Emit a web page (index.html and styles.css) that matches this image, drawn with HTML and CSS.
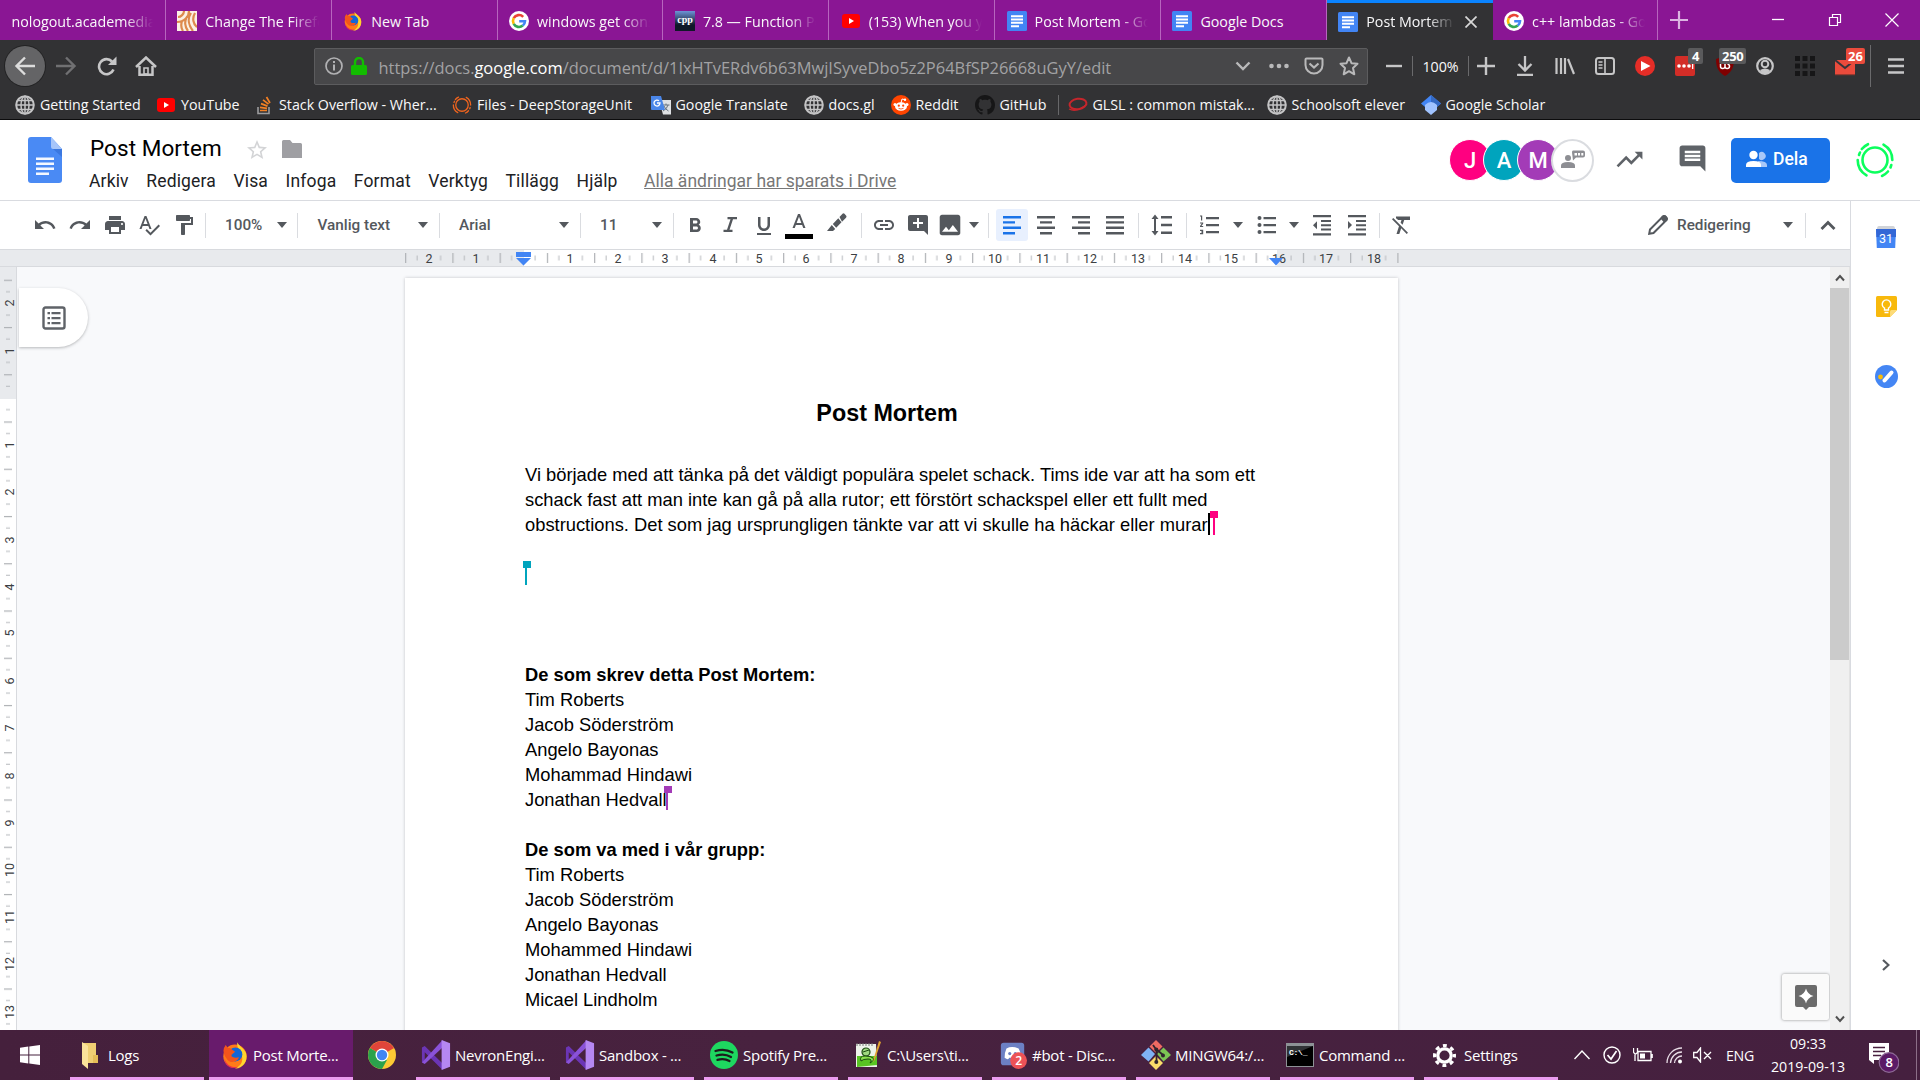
FILE: index.html
```html
<!DOCTYPE html>
<html lang="sv">
<head>
<meta charset="utf-8">
<title>Post Mortem</title>
<link rel="stylesheet" href="styles.css">
</head>
<body>
<svg class="defs" width="0" height="0">
  <symbol id="gdoc" viewBox="0 0 20 20"><rect width="20" height="20" rx="1.5" fill="#4285f4"/><path d="M4 4.2h12v2H4zM4 7.4h12v2H4zM4 10.8h12v2H4zM4 14.2h8v2H4z" fill="#fff"/></symbol>
  <symbol id="google" viewBox="0 0 20 20"><circle cx="10" cy="10" r="10" fill="#fff"/><g fill="none" stroke-width="2.6"><path d="M14.2 5.8A6 6 0 0 0 4.7 7.2" stroke="#ea4335"/><path d="M4.7 7.2a6 6 0 0 0 0 5.6" stroke="#fbbc05"/><path d="M4.7 12.8a6 6 0 0 0 9.1 1.8" stroke="#34a853"/><path d="M13.8 14.6A6 6 0 0 0 16 10.2h-5.8" stroke="#4285f4"/></g></symbol>
  <symbol id="youtube" viewBox="0 0 20 20"><rect x="1" y="3" width="18" height="14" rx="3" fill="#f00"/><path d="M8 7l5 3-5 3z" fill="#fff"/></symbol>
  <symbol id="firefox" viewBox="0 0 24 24"><circle cx="12" cy="13" r="10" fill="#ff7a18"/><path d="M14 1c1 3 6 5 7.500 9.500C23.500 18 18 24 12 23.500c5-2 7-6 6-10.500C17.500 9 13 6 14 1z" fill="#ffd52e"/><circle cx="12.300" cy="11.500" r="6" fill="#1266d8"/><path d="M2.500 6c1-1 1-2 1.500-2.500l2 2.500c2 0 3 .5 3.500 1.500L12 9c-1 2-3 2-3 3.500s3 2.500 6.500 1.500c-1.500 4-7 5.500-10 2S1.500 9 2.500 6z" fill="#f3541c"/><path d="M3 15c1 5 6 8.500 12 7-5 3-12 0-12-7z" fill="#e62c50"/></symbol>
  <symbol id="globe" viewBox="0 0 20 20"><g fill="none" stroke="#c4c4c5" stroke-width="1.500"><circle cx="10" cy="10" r="8.800" stroke-width="2"/><ellipse cx="10" cy="10" rx="4" ry="8.800"/><path d="M10 1v18M1 10h18M2.500 5.500h15M2.500 14.500h15"/></g></symbol>
  <symbol id="rings" viewBox="0 0 40 40"><g fill="none" stroke="currentColor" stroke-width="2.600" stroke-linecap="round"><circle cx="20" cy="20" r="12.500"/><path d="M13 4.200A17.500 17.500 0 0 0 6.800 9M2.700 20a17.500 17.500 0 0 0 8.800 15.300M27 36a17.500 17.500 0 0 0 6-4.500M37.300 20A17.500 17.500 0 0 0 28.500 4.700M5 12.500a17 17 0 0 0-1 2.500M35.500 27.500l.8-2.500"/></g></symbol>
  <symbol id="caret" viewBox="0 0 10 6"><path d="M0 0h10L5 6z" fill="currentColor"/></symbol>
  <symbol id="vs" viewBox="0 0 30 32"><path d="M0 8l3-1.500L22 25v7L3 13v12l-3-1.500z" fill="#6b35b5"/><path d="M0 24l22-24v8L3 25.500z" fill="#8a52d8"/><path d="M21 0l9 3.500v25L21 32z" fill="#b587f2"/></symbol>
</svg>

<div class="browser">
  <div class="tabs">
    <div class="tab bare"><span>nologout.academedia</span></div>
    <div class="tab"><svg viewBox="0 0 20 20"><rect width="20" height="20" fill="#fbf1e4"/><g fill="none" stroke="#dd8a4d" stroke-width="2.200"><path d="M1 6c3 0 6-3 6-6M0 11c7 0 12-5 12-11M5 10c-1 3-1 7 1 10M10 6c-3 4-2 10 1 14M14 2c-4 6-2 13 2 18M18 2c-3 5-2 11 2 14"/></g></svg><span>Change The Firefox</span></div>
    <div class="tab"><svg><use href="#firefox"/></svg><span>New Tab</span></div>
    <div class="tab"><svg><use href="#google"/></svg><span>windows get console</span></div>
    <div class="tab"><svg viewBox="0 0 20 20"><defs><linearGradient id="cg" x2="0" y2="1"><stop stop-color="#6d93d6"/><stop offset=".7" stop-color="#101828"/></linearGradient></defs><rect width="20" height="20" fill="url(#cg)"/><text x="10" y="12" text-anchor="middle" class="cpp">cpp</text></svg><span>7.8 — Function Poi</span></div>
    <div class="tab"><svg><use href="#youtube"/></svg><span>(153) When you you</span></div>
    <div class="tab"><svg><use href="#gdoc"/></svg><span>Post Mortem - Goo</span></div>
    <div class="tab"><svg><use href="#gdoc"/></svg><span>Google Docs</span></div>
    <div class="tab active"><svg><use href="#gdoc"/></svg><span>Post Mortem - G</span><svg class="close" viewBox="0 0 12 12"><path d="M0.500.5l11 11M11.500.5l-11 11" stroke="#d8d8d8" stroke-width="1.700"/></svg></div>
    <div class="tab"><svg><use href="#google"/></svg><span>c++ lambdas - Goo</span></div>
    <svg class="newtab" viewBox="0 0 18 18"><path d="M9 0v18M0 9h18" stroke="#dcb4e2" stroke-width="2.200"/></svg>
    <div class="winctl">
      <svg viewBox="0 0 14 14"><path d="M1 6.500h12" stroke="#fff" stroke-width="1.300"/></svg>
      <svg viewBox="0 0 14 14"><path d="M1.500 4.500h8v8h-8zM4.500 4.500v-3h8v8h-3" fill="none" stroke="#fff" stroke-width="1.200"/></svg>
      <svg viewBox="0 0 14 14"><path d="M.5.500l13 13M13.500.500l-13 13" stroke="#fff" stroke-width="1.200"/></svg>
    </div>
  </div>

  <div class="nav">
    <div class="back"><svg width="22" height="20" viewBox="0 0 22 20"><path d="M21 10H3M11 1.500L2.500 10l8.500 8.500" fill="none" stroke="#dcdcdc" stroke-width="2.400"/></svg></div>
    <svg width="22" height="20" viewBox="0 0 22 20"><path d="M1 10h18M11 1.500l8.500 8.500-8.500 8.500" fill="none" stroke="#707072" stroke-width="2.400"/></svg>
    <svg width="22" height="20" viewBox="0 0 22 20"><path d="M17.500 13.500A7.500 7.500 0 1 1 16 5.500" fill="none" stroke="#c6c6c7" stroke-width="2.600"/><path d="M20.500.5v8.500H12z" fill="#c6c6c7"/></svg>
    <svg width="22" height="20" viewBox="0 0 22 20"><path d="M1 11L11 1.500 21 11M4.500 10v8.700h13V10" fill="none" stroke="#c6c6c7" stroke-width="2.500"/><path d="M9 18v-6h4v6z" fill="none" stroke="#c6c6c7" stroke-width="1.600"/></svg>
    <span></span>
    <div class="url">
      <svg width="18" height="18" viewBox="0 0 18 18"><circle cx="9" cy="9" r="8" fill="none" stroke="#b1b1b3" stroke-width="1.700"/><path d="M9 4v2M9 7.500v6" stroke="#b1b1b3" stroke-width="2"/></svg>
      <svg class="lock" width="16" height="18" viewBox="0 0 16 18"><rect y="8" width="16" height="10" rx="1.500" fill="#12bc00"/><path d="M4 9V5a4 4 0 0 1 8 0v4" fill="none" stroke="#12bc00" stroke-width="2.400"/></svg>
      <span class="addr">https://docs.<b>google.com</b>/document/d/1IxHTvERdv6b63MwjISyveDbo5z2P64BfSP26668uGyY/edit</span>
      <svg width="16" height="20" viewBox="0 0 16 20"><path d="M1.500 6.500L8 13l6.500-6.500" fill="none" stroke="#b9b9ba" stroke-width="2.400"/></svg>
      <svg class="dots" width="20" height="20" viewBox="0 0 20 20"><g fill="#b9b9ba"><circle cx="2.500" cy="10" r="2.300"/><circle cx="10" cy="10" r="2.300"/><circle cx="17.500" cy="10" r="2.300"/></g></svg>
      <svg width="20" height="18" viewBox="0 0 20 18"><path d="M1.500 2.500q0-1 1-1h15q1 0 1 1V8a8.500 8.500 0 0 1-17 0z" fill="none" stroke="#b9b9ba" stroke-width="2"/><path d="M5.500 6.500L10 10.500l4.500-4" fill="none" stroke="#b9b9ba" stroke-width="2.200"/></svg>
      <svg width="20" height="20" viewBox="0 0 20 20"><path d="M10 1.500l2.500 5.700 6 .6-4.500 4.200 1.300 6.300L10 15.200l-5.300 3.100L6 12 1.500 7.800l6-.6z" fill="none" stroke="#b9b9ba" stroke-width="2" stroke-linejoin="round"/></svg>
    </div>
    <svg class="minus" width="16" height="18" viewBox="0 0 16 18"><path d="M0 9h16" stroke="#c6c6c7" stroke-width="2.400"/></svg>
    <i class="bar"></i>
    <span class="zoom">100%</span>
    <i class="bar"></i>
    <svg class="plus" width="18" height="18" viewBox="0 0 18 18"><path d="M0 9h18M9 0v18" stroke="#c6c6c7" stroke-width="2.400"/></svg>
    <svg width="18" height="20" viewBox="0 0 18 20"><path d="M9 0v14M2.500 8L9 14.500 15.500 8M1 18.800h16" fill="none" stroke="#c6c6c7" stroke-width="2.300"/></svg>
    <svg width="20" height="18" viewBox="0 0 20 18"><path d="M1.500 1v16M6 1v16M10 1v16M13 2l6 15" fill="none" stroke="#c6c6c7" stroke-width="2.200"/></svg>
    <svg width="20" height="18" viewBox="0 0 20 18"><rect x="1" y="1" width="18" height="16" rx="2.500" fill="none" stroke="#c6c6c7" stroke-width="2"/><path d="M10 1v16M3.500 5h4M3.500 8h4M3.500 11h4" stroke="#c6c6c7" stroke-width="1.600"/></svg>
    <svg width="20" height="20" viewBox="0 0 20 20"><circle cx="10" cy="10" r="10" fill="#e52d27"/><path d="M6 5l9.500 5L6 15z" fill="#fff"/></svg>
    <div class="ext"><svg width="20" height="20" viewBox="0 0 20 20"><rect width="20" height="20" rx="2" fill="#d32d27"/><g fill="#fff"><circle cx="4" cy="10" r="1.800"/><circle cx="9" cy="10" r="1.800"/><circle cx="14" cy="10" r="1.800"/><path d="M17 8h1.300v5H17z"/></g></svg><em>4</em></div>
    <div class="ext"><svg width="20" height="20" viewBox="0 0 20 20"><path d="M10 0l9 3c0 8-2 13-9 17C3 16 1 11 1 3z" fill="#800000"/><path d="M5.500 8v2.500q0 2 2.200 2t2.300-2V8m0 2.500q0 2 2.200 2t2.300-2-2-2.500" fill="none" stroke="#fff" stroke-width="1.500"/></svg><em>250</em></div>
    <svg width="18" height="18" viewBox="0 0 18 18"><circle cx="9" cy="9" r="7.800" fill="none" stroke="#c6c6c7" stroke-width="2.200"/><circle cx="9" cy="7" r="3.300" fill="none" stroke="#c6c6c7" stroke-width="2"/><path d="M4 13q5-3 10 0l-2 3H6z" fill="#c6c6c7"/></svg>
    <svg width="20" height="20" viewBox="0 0 20 20"><path d="M0 0h5v5H0zM7.500 0h5v5h-5zM15 0h5v5h-5zM0 7.500h5v5H0zM7.500 7.500h5v5h-5zM15 7.500h5v5h-5zM0 15h5v5H0zM7.500 15h5v5h-5zM15 15h5v5h-5z" fill="#161617"/></svg>
    <div class="ext mail"><svg width="20" height="20" viewBox="0 0 20 20"><path d="M0 4h20v14H0z" fill="#ea4b3c"/><path d="M0 4l10 8L20 4" fill="none" stroke="#34343a" stroke-width="2"/><path d="M0 18h20v1.200H0z" fill="#9a3a30"/></svg><em>26</em></div>
    <i class="bar tall"></i>
    <svg width="16" height="18" viewBox="0 0 16 18"><path d="M0 2.500h16M0 9h16M0 15.500h16" stroke="#c6c6c7" stroke-width="2.300"/></svg>
  </div>

  <div class="marks">
    <div><svg><use href="#globe"/></svg>Getting Started</div>
    <div><svg><use href="#youtube"/></svg>YouTube</div>
    <div><svg viewBox="0 0 20 20"><path d="M4 12v6.500h11V12" fill="none" stroke="#9c9c9e" stroke-width="1.600"/><path d="M6 15.500h7M6 12.400l7 1M7 8.600l6.500 2.500M9 4.800l5.500 4.400M12.500 2l3.500 6" stroke="#f48024" stroke-width="1.700"/></svg>Stack Overflow - Wher...</div>
    <div class="orange"><svg><use href="#rings"/></svg>Files - DeepStorageUnit</div>
    <div><svg viewBox="0 0 20 20"><path d="M8 5h12v14.500h-8z" fill="#dfe1e4"/><path d="M11.500 10h7M15 8.500V10m2 0q-1 4-5 6m1-5q1 3 4.500 5" fill="none" stroke="#66717c" stroke-width="1"/><path d="M0 1h10l4 14H1q-1 0-1-1z" fill="#4a86e8"/><path d="M8 5.800A3 3 0 1 0 9 8H6" fill="none" stroke="#fff" stroke-width="1.300"/></svg>Google Translate</div>
    <div><svg><use href="#globe"/></svg>docs.gl</div>
    <div><svg viewBox="0 0 20 20"><circle cx="10" cy="10" r="10" fill="#ff4500"/><ellipse cx="10" cy="11.500" rx="6" ry="4.300" fill="#fff"/><circle cx="4" cy="9.500" r="1.500" fill="#fff"/><circle cx="16" cy="9.500" r="1.500" fill="#fff"/><path d="M10 8l1-4 3 .7" fill="none" stroke="#fff"/><circle cx="14" cy="4.800" r="1.200" fill="#fff"/><circle cx="7.800" cy="10.700" r="1.100" fill="#ff4500"/><circle cx="12.200" cy="10.700" r="1.100" fill="#ff4500"/><path d="M7.500 13.300q2.500 1.500 5 0" fill="none" stroke="#ff4500" stroke-width=".8"/></svg>Reddit</div>
    <div><svg viewBox="0 0 16 16"><path fill="#161617" d="M8 0C3.580 0 0 3.580 0 8c0 3.540 2.290 6.530 5.470 7.590.4.070.55-.17.55-.38 0-.19-.01-.82-.01-1.490-2.010.37-2.530-.49-2.690-.94-.09-.23-.48-.94-.82-1.130-.28-.15-.68-.52-.01-.53.63-.01 1.080.58 1.230.82.72 1.210 1.870.87 2.330.66.07-.52.28-.87.51-1.070-1.780-.2-3.640-.89-3.640-3.950 0-.87.31-1.590.82-2.150-.08-.2-.36-1.020.08-2.120 0 0 .67-.21 2.200.82.640-.18 1.320-.27 2-.27s1.360.09 2 .27c1.530-1.040 2.200-.82 2.200-.82.44 1.100.16 1.920.08 2.120.51.56.82 1.270.82 2.150 0 3.070-1.870 3.750-3.650 3.950.29.25.54.73.54 1.480 0 1.070-.01 1.930-.01 2.200 0 .21.15.46.55.38A8.010 8.010 0 0 0 16 8c0-4.420-3.580-8-8-8z"/></svg>GitHub</div>
    <div class="sep"><svg viewBox="0 0 20 20"><ellipse cx="10" cy="9" rx="8.500" ry="5.200" transform="rotate(-8 10 9)" fill="none" stroke="#c5262c" stroke-width="2"/><path d="M1 14q8 4 18-5" fill="none" stroke="#c5262c" stroke-width="1.300"/></svg>GLSL : common mistak...</div>
    <div><svg><use href="#globe"/></svg>Schoolsoft elever</div>
    <div><svg viewBox="0 0 20 20"><path d="M10 0l10 8.500-4 3.500H4L0 8.500z" fill="#4285f4"/><path d="M10 0l10 8.500-4 3.500-6-5z" fill="#356ac3"/><path d="M4 10q6-6 12 0v5l-6 5-6-5z" fill="#a0c3ff"/></svg>Google Scholar</div>
  </div>
</div>

<header class="head">
  <svg class="logo" viewBox="0 0 34 46"><path d="M3 0h20l11 12v31q0 3-3 3H3q-3 0-3-3V3q0-3 3-3z" fill="#4a8af4"/><path d="M23 0l11 12H25q-2 0-2-2z" fill="#a6c5fa"/><path d="M25 12h9v8z" fill="#3b78e0"/><path d="M8 20.500h18v2.500H8zM8 25.500h18V28H8zM8 30.500h18V33H8zM8 35.500h13V38H8z" fill="#f4f8ff"/></svg>
  <div class="names">
    <div class="titlerow"><h1>Post Mortem</h1>
      <svg class="star" viewBox="2 2 20 19"><path fill="#d3d4d6" d="M22 9.240l-7.190-.62L12 2 9.190 8.630 2 9.240l5.460 4.730L5.820 21 12 17.270 18.180 21l-1.630-7.030L22 9.240zM12 15.400l-3.760 2.270 1-4.280-3.320-2.880 4.380-.38L12 6.100l1.710 4.040 4.380.38-3.320 2.880 1 4.280L12 15.400z"/></svg>
      <svg class="folder" viewBox="0 0 20 18"><path d="M0 1.500Q0 0 1.500 0H8l2.500 3h8Q20 3 20 4.500V18H0z" fill="#9f9fa3"/></svg>
    </div>
    <nav class="menu"><span>Arkiv</span><span>Redigera</span><span>Visa</span><span>Infoga</span><span>Format</span><span>Verktyg</span><span>Tillägg</span><span>Hjälp</span><a>Alla ändringar har sparats i Drive</a></nav>
  </div>
  <div class="people"><b class="j">J</b><b class="a">A</b><b class="m">M</b><b class="chat"><svg width="24" height="20" viewBox="0 0 24 20"><g fill="#8d8e93"><circle cx="7" cy="8" r="3"/><path d="M0 18v-2.500Q0 12 7 12t7 3.500V18z"/><path d="M12 .5h10q2 0 2 2v3q0 2-2 2h-7l-3 3-1-8q0-2 1-2z"/></g><path d="M13.500 3h2.500v2.500h-2.500zM17 3h2v2.500h-2zM20.300 3h2v2.500h-2z" fill="#fff"/></svg></b></div>
  <svg class="trend" viewBox="0 0 24 24"><path d="M16 6l2.290 2.290-4.880 4.880-4-4L2 16.590 3.410 18l6-6 4 4 6.300-6.290L22 12V6z"/></svg>
  <svg class="cmt" viewBox="0 0 24 24"><path d="M21.990 4c0-1.100-.89-2-1.990-2H4c-1.100 0-2 .9-2 2v12c0 1.100.9 2 2 2h14l4 4-.01-18zM18 14H6v-2h12v2zm0-3H6V9h12v2zm0-3H6V6h12v2z"/></svg>
  <button class="share"><svg width="21" height="18" viewBox="0 0 21 18"><path d="M13 3a4 4 0 1 1 0 6zM12 11q9 0 9 4v2h-7z" fill="#a9c8f8"/><circle cx="7.500" cy="5" r="4.200" fill="#fff"/><path d="M0 17v-2q0-4 7.500-4t7.500 4v2z" fill="#fff"/></svg>Dela</button>
  <svg class="me" viewBox="0 0 40 40"><use href="#rings"/></svg>
</header>

<div class="work">
  <main class="editor">
    <div class="toolbar">
      <svg viewBox="0 0 24 24"><path d="M12.500 8c-2.650 0-5.050.99-6.900 2.600L2 7v9h9l-3.620-3.620c1.390-1.160 3.160-1.880 5.120-1.880 3.540 0 6.550 2.310 7.600 5.500l2.370-.78C21.080 11.030 17.150 8 12.500 8z"/></svg>
      <svg viewBox="0 0 24 24"><path d="M18.400 10.600C16.550 8.990 14.150 8 11.500 8c-4.650 0-8.580 3.030-9.960 7.220L3.900 16c1.050-3.190 4.050-5.500 7.600-5.500 1.950 0 3.730.72 5.120 1.880L13 16h9V7l-3.600 3.600z"/></svg>
      <svg viewBox="0 0 24 24"><path d="M19 8H5c-1.660 0-3 1.340-3 3v6h4v4h12v-4h4v-6c0-1.660-1.340-3-3-3zm-3 11H8v-5h8v5zm3-7c-.55 0-1-.45-1-1s.45-1 1-1 1 .45 1 1-.45 1-1 1zm-1-9H6v4h12V3z"/></svg>
      <svg viewBox="0 0 24 24"><path d="M12.450 16h2.090L9.430 3H7.570L2.460 16h2.090l1.120-3h5.640l1.140 3zm-6.020-5L8.500 5.480 10.570 11H6.430zm15.160.59l-8.090 8.090L9.830 16l-1.410 1.410 5.090 5.090L23 13l-1.410-1.410z"/></svg>
      <svg viewBox="0 0 24 24"><path d="M18 4V3c0-.55-.45-1-1-1H5c-.55 0-1 .45-1 1v4c0 .55.45 1 1 1h12c.55 0 1-.45 1-1V6h1v4H9v11c0 .55.45 1 1 1h2c.55 0 1-.45 1-1v-9h8V4h-3z"/></svg>
      <i></i>
      <div class="pick">100%<svg class="car"><use href="#caret"/></svg></div>
      <i></i>
      <div class="pick">Vanlig text<svg class="car"><use href="#caret"/></svg></div>
      <i></i>
      <div class="pick">Arial<svg class="car"><use href="#caret"/></svg></div>
      <i></i>
      <div class="pick">11<svg class="car"><use href="#caret"/></svg></div>
      <i></i>
      <svg viewBox="0 0 24 24"><path d="M15.600 10.790c.97-.67 1.650-1.770 1.650-2.790 0-2.260-1.750-4-4-4H7v14h7.040c2.090 0 3.710-1.700 3.710-3.790 0-1.520-.86-2.820-2.150-3.420zM10 6.500h3c.83 0 1.500.67 1.500 1.500s-.67 1.500-1.500 1.500h-3v-3zm3.500 9H10v-3h3.500c.83 0 1.500.67 1.500 1.500s-.67 1.500-1.500 1.500z" transform="translate(0 1)"/></svg>
      <svg viewBox="0 0 24 24"><path d="M9.500 5v2.200h3L9 17.800H5.500V20h9v-2.200h-3L15 7.200h4V5z" transform="translate(0 -1)"/></svg>
      <svg viewBox="0 0 24 24"><path d="M12 17c3.310 0 6-2.690 6-6V3h-2.500v8c0 1.930-1.570 3.500-3.500 3.500S8.500 12.930 8.500 11V3H6v8c0 3.310 2.690 6 6 6zm-7 2v2h14v-2H5z" transform="translate(0 1)"/></svg>
      <svg class="big" viewBox="0 0 28 30"><path d="M13 4L7.500 18h2.250l1.120-3h6.250l1.120 3h2.250L15 4h-2zm-1.380 9L14 6.670l2.380 6.330z"/><path d="M0 24h28v5H0z" fill="#000"/></svg>
      <svg viewBox="0 0 24 24"><path d="M15.500 4l3-3.200q1-1 2 0l1.500 1.700q1 1 0 2.200l-4 4zM14.300 5.200l3.200 4.100-5.300 5.500-3.400-3.800zM7.800 12.100l3.400 4-2.200 1.900H3z" transform="translate(-1 0)"/></svg>
      <i></i>
      <svg viewBox="0 0 24 24"><path d="M3.900 12c0-1.710 1.390-3.100 3.100-3.100h4V7H7c-2.760 0-5 2.240-5 5s2.240 5 5 5h4v-1.900H7c-1.710 0-3.100-1.390-3.100-3.100zM8 13h8v-2H8v2zm9-6h-4v1.900h4c1.710 0 3.100 1.390 3.100 3.100s-1.390 3.100-3.100 3.100h-4V17h4c2.760 0 5-2.240 5-5s-2.240-5-5-5z"/></svg>
      <svg viewBox="0 0 24 24"><path d="M21.990 4c0-1.100-.89-2-1.990-2H4c-1.100 0-2 .9-2 2v12c0 1.100.9 2 2 2h14l4 4-.01-18zM17 11h-4v4h-2v-4H7V9h4V5h2v4h4v2z"/></svg>
      <svg viewBox="1.500 1.500 21 21"><path d="M21 19V5c0-1.100-.9-2-2-2H5c-1.100 0-2 .9-2 2v14c0 1.100.9 2 2 2h14c1.100 0 2-.9 2-2zM8.500 13.500l2.500 3.010L14.500 12l4.500 6H5l3.500-4.500z"/></svg>
      <svg class="car"><use href="#caret"/></svg>
      <i></i>
      <div class="on"><svg viewBox="0 0 24 24"><path d="M3 2h18v2.400H3zM3 7.200h12v2.400H3zM3 12.600h18V15H3zM3 18h12v2.400H3z" transform="translate(0 1)"/></svg></div>
      <svg viewBox="0 0 24 24"><path d="M3 3h18v2.400H3zM6 8.200h12v2.400H6zM3 13.600h18V16H3zM6 19h12v2.400H6z"/></svg>
      <svg viewBox="0 0 24 24"><path d="M3 3h18v2.400H3zM9 8.200h12v2.400H9zM3 13.600h18V16H3zM9 19h12v2.400H9z"/></svg>
      <svg viewBox="0 0 24 24"><path d="M3 3h18v2.400H3zM3 8.200h18v2.400H3zM3 13.600h18V16H3zM3 19h18v2.400H3z"/></svg>
      <i></i>
      <svg viewBox="0 0 24 24"><path d="M6 6h2.500L5 1.500 1.500 6H4v12H1.500L5 22.500 8.500 18H6V6zm5-3v2.400h11V3H11zm0 18h11v-2.400H11V21zm0-7.800h11v-2.400H11v2.400z"/></svg>
      <i></i>
      <svg viewBox="0 0 24 24"><path d="M2 18h2v.5H3v1h1v.5H2v1.200h3.200v-4.400H2V18zm1-10.500h1.200V2.500H2v1h1v4zm-1 3h1.800L2 12.900v1.100h3.200v-1.100H3.400l1.800-2.100V9.500H2v1zM8 4v2.300h13V4H8zm0 16.300h13V18H8v2.300zm0-7h13V11H8v2.300z"/></svg>
      <svg class="car"><use href="#caret"/></svg>
      <svg viewBox="0 0 24 24"><g><circle cx="4.500" cy="5" r="2"/><circle cx="4.500" cy="12" r="2"/><circle cx="4.500" cy="19" r="2"/><path d="M8.500 4H21v2.200H8.500zM8.500 11H21v2.200H8.500zM8.500 18H21v2.200H8.500z"/></g></svg>
      <svg class="car"><use href="#caret"/></svg>
      <svg viewBox="0 0 24 24"><path d="M11 17.500h10v-2H11v2zm-8-5.300l4 4V8.200l-4 4zM3 22.500h18v-2.200H3v2.200zM3 2v2.200h18V2H3zm8 7h10V7H11v2zm0 4.200h10v-2H11v2z"/></svg>
      <svg viewBox="0 0 24 24"><path d="M3 22.500h18v-2.200H3v2.200zM3 8v8l4-4-4-4zm8 9.500h10v-2H11v2zM3 2v2.200h18V2H3zm8 7h10V7H11v2zm0 4.200h10v-2H11v2z"/></svg>
      <i></i>
      <svg viewBox="0 0 24 24"><path d="M3.270 5L2 6.270l6.970 6.970L6.500 21h2.800l1.900-5.660L16.730 21 18 19.730 3.550 5.270 3.270 5zM6 3.500v1.680L8.200 7h3.300l-.9 2.680 2 2.100L14.210 7H20V3.500H6z"/></svg>
      <span></span>
      <svg viewBox="0 0 24 24"><path d="M4 16.500L15.500 5q2-3.500 4.500-1t-1 4.500L7.500 20 3.200 20.800z" fill="none" stroke="#54585d" stroke-width="2"/><path d="M14.500 5.500L19 2l3 3.500-4 4z"/></svg>
      <div class="pick mode">Redigering</div>
      <svg class="car"><use href="#caret"/></svg>
      <i></i>
      <svg viewBox="0 0 24 24"><path d="M5.500 16L12 9.500l6.500 6.500" fill="none" stroke="#54585d" stroke-width="2.800"/></svg>
    </div>

    <svg class="ruler" width="1850" height="18" viewBox="0 249 1850 18">
      <defs><pattern id="ticks" x="405.100" y="249" width="47.250" height="18" patternUnits="userSpaceOnUse"><path d="M.6 4v10" stroke="#aeb1b5" stroke-width="1.200"/><path d="M12 6.500v5M35.500 6.500v5" stroke="#b6b9bd"/></pattern></defs>
      <rect y="249" width="1850" height="18" fill="#e8eaed"/><rect x="524" y="249" width="753" height="18" fill="#fff"/>
      <rect x="405" y="249" width="994" height="18" fill="url(#ticks)"/>
      <g class="nums"><text x="429" y="263">2</text><text x="476" y="263">1</text><text x="570" y="263">1</text><text x="618" y="263">2</text><text x="665" y="263">3</text><text x="713" y="263">4</text><text x="759" y="263">5</text><text x="806" y="263">6</text><text x="854" y="263">7</text><text x="901" y="263">8</text><text x="949" y="263">9</text><text x="995" y="263">10</text><text x="1043" y="263">11</text><text x="1090" y="263">12</text><text x="1138" y="263">13</text><text x="1185" y="263">14</text><text x="1231" y="263">15</text><text x="1279" y="263">16</text><text x="1326" y="263">17</text><text x="1374" y="263">18</text></g>
      <path d="M516 252h15v5h-15zM516 258h15l-7.500 7.500zM1269 258h14l-7 7.500z" fill="#4285f4"/>
      <path d="M0 249.500h1850M0 266.500h1850" stroke="#d8dade"/>
    </svg>

    <div class="canvas">
      <svg class="vruler" width="17" height="763" viewBox="0 267 17 763">
        <defs><pattern id="vt" x="0" y="279.700" width="17" height="47.250" patternUnits="userSpaceOnUse"><path d="M4 .6h8" stroke="#aeb1b5" stroke-width="1.200"/><path d="M6 12h4M6 35.500h4" stroke="#b6b9bd"/></pattern></defs>
        <rect y="267" width="17" height="763" fill="#fff"/><rect y="267" width="17" height="132" fill="#e8eaed"/>
        <rect y="279" width="17" height="751" fill="url(#vt)"/>
        <g class="nums"><text transform="translate(14 303)rotate(-90)">2</text><text transform="translate(14 351)rotate(-90)">1</text><text transform="translate(14 445)rotate(-90)">1</text><text transform="translate(14 492)rotate(-90)">2</text><text transform="translate(14 540)rotate(-90)">3</text><text transform="translate(14 587)rotate(-90)">4</text><text transform="translate(14 633)rotate(-90)">5</text><text transform="translate(14 681)rotate(-90)">6</text><text transform="translate(14 728)rotate(-90)">7</text><text transform="translate(14 776)rotate(-90)">8</text><text transform="translate(14 823)rotate(-90)">9</text><text transform="translate(14 870)rotate(-90)">10</text><text transform="translate(14 917)rotate(-90)">11</text><text transform="translate(14 964)rotate(-90)">12</text><text transform="translate(14 1012)rotate(-90)">13</text></g>
        <path d="M16.500 267v763" stroke="#d8dade"/>
      </svg>
      <div class="left"><div class="outline"><svg width="24" height="24" viewBox="0 0 24 24"><rect x="1.500" y="1.500" width="21" height="21" rx="2" fill="none" stroke="#5f6368" stroke-width="2.400"/><path d="M5.500 6h2.500v2.200H5.500zM9.500 6h9v2.200h-9zM5.500 11h2.500v2.200H5.500zM9.500 11h9v2.200h-9zM5.500 16h2.500v2.200H5.500zM9.500 16h9v2.200h-9z" fill="#5f6368"/></svg></div></div>
      <article class="page">
        <h2>Post Mortem</h2>
        <p>Vi började med att tänka på det väldigt populära spelet schack. Tims ide var att ha som ett<br>schack fast att man inte kan gå på alla rutor; ett förstört schackspel eller ett fullt med<br>obstructions. Det som jag ursprungligen tänkte var att vi skulle ha häckar eller murar<s class="own"></s><s class="flag pink"></s></p>
        <p class="gap"><s class="flag teal"></s></p>
        <h3>De som skrev detta Post Mortem:</h3>
        <p>Tim Roberts<br>Jacob Söderström<br>Angelo Bayonas<br>Mohammad Hindawi<br>Jonathan Hedvall<s class="flag violet"></s></p>
        <h3>De som va med i vår grupp:</h3>
        <p>Tim Roberts<br>Jacob Söderström<br>Angelo Bayonas<br>Mohammed Hindawi<br>Jonathan Hedvall<br>Micael Lindholm</p>
      </article>
      <div class="right"><div class="explore"><svg width="22" height="25" viewBox="0 0 22 25"><path d="M2 0h18q2 0 2 2v18q0 2-2 2h-6l-3 3-3-3H2q-2 0-2-2V2q0-2 2-2z" fill="#6b6b6b"/><path d="M11 3.500q1.500 6 7.500 7.500-6 1.500-7.500 7.500-1.500-6-7.500-7.500 6-1.500 7.500-7.500z" fill="#fff"/></svg></div></div>
      <div class="scroll"><svg viewBox="0 0 10 8"><path d="M1 6.500l4-4.500 4 4.500" fill="none" stroke="#505050" stroke-width="2"/></svg><div class="thumb"></div><svg viewBox="0 0 10 8"><path d="M1 1.500L5 6l4-4.500" fill="none" stroke="#505050" stroke-width="2"/></svg></div>
    </div>
  </main>
  <aside class="side">
    <svg width="20" height="22" viewBox="0 0 20 22"><path d="M1 3q0-3 2-3h14q2 0 2 3z" fill="#d0d3d8"/><path d="M0 3h20l-.8 19H.8z" fill="#4285f4"/><path d="M0 3h20v8H.4z" fill="#3367d6"/><text x="10" y="17" text-anchor="middle" class="cal">31</text></svg>
    <svg width="21" height="21" viewBox="0 0 21 21"><path d="M1.500 0h18Q21 0 21 1.500V14l-7 7H1.500Q0 21 0 19.500v-18Q0 0 1.500 0z" fill="#f8b90c"/><path d="M14 21v-5.500q0-1.500 1.500-1.500H21z" fill="#fddb78"/><path d="M8.500 14v-2a4.300 4.300 0 1 1 4 0v2zM8.500 16.500h4" fill="none" stroke="#fff" stroke-width="1.400"/></svg>
    <svg width="23" height="23" viewBox="0 0 23 23"><circle cx="11.500" cy="11.500" r="11.500" fill="#4486f4"/><circle cx="5.500" cy="12" r="2.400" fill="#fbbc05"/><path d="M9.500 15.500l7-8" stroke="#fff" stroke-width="4" stroke-linecap="round"/></svg>
    <svg class="exp" width="8" height="12" viewBox="0 0 8 12"><path d="M1 1l5.500 5L1 11" fill="none" stroke="#55595e" stroke-width="2.200"/></svg>
  </aside>
</div>

<footer class="task">
  <svg class="win" viewBox="0 0 20 20"><path d="M0 2.800L8.300 1.600v8H0zM9.300 1.500L20 0v9.600H9.300zM0 10.500h8.300v8L0 17.300zM9.300 10.500H20V20L9.300 18.500z" fill="#fff"/></svg>
  <div class="app logs"><svg viewBox="0 0 24 28"><path d="M4 2h13v20H8z" fill="#f0cf73"/><path d="M3 1l6 4v23l-6-5z" fill="#fbe29a"/><path d="M14 14h5v8h-5z" fill="#e5bd57"/></svg>Logs</div>
  <div class="app cur"><svg><use href="#firefox"/></svg>Post Morte...</div>
  <div class="chrome"><svg viewBox="0 0 28 28"><circle cx="14" cy="14" r="14" fill="#fcc934"/><path d="M14 14L1.900 7A14 14 0 0 1 26.100 7z" fill="#e0453a"/><path d="M14 14L1.900 7A14 14 0 0 0 14 28l5-9z" fill="#2ba24c"/><circle cx="14" cy="14" r="6.500" fill="#fff"/><circle cx="14" cy="14" r="5.200" fill="#4285f4"/></svg></div>
  <div class="app wide"><svg><use href="#vs"/></svg>NevronEngi...</div>
  <div class="app wide"><svg><use href="#vs"/></svg>Sandbox - ...</div>
  <div class="app spot"><svg viewBox="0 0 28 28"><circle cx="14" cy="14" r="14" fill="#1ed760"/><path d="M5.500 10q9-3 17 1.500M6.500 14.500q8-2.500 14.500 1.500M7.500 18.800q6.500-2 12 1.200" fill="none" stroke="#1c1c1c" stroke-width="2.300" stroke-linecap="round"/></svg>Spotify Pre...</div>
  <div class="app npp"><svg viewBox="0 0 28 28"><path d="M1 3h20l1 23H1z" fill="#eef3ea"/><path d="M2 15h20v9L2 26z" fill="#58c423"/><path d="M2 2v3M5 2v3M8 2v3M11 2v3M14 2v3M17 2v3" stroke="#777"/><circle cx="11" cy="11" r="4" fill="#9ed880" stroke="#1c4a12" stroke-width="1.200"/><path d="M8 11l6-2" stroke="#1c4a12"/><path d="M6 20q-2-5 4-5t8 2-3 5q3-4-2-4t-7 2z" fill="#8ae04c" stroke="#1c4a12"/><path d="M26 1l-6 17-1.500 3.500.2-4L24 0z" fill="#e2a32f"/></svg>C:\Users\ti...</div>
  <div class="app disc"><svg viewBox="0 0 28 30"><path d="M4 2h19q3 0 3 3v21H4q-3 0-3-3V5q0-3 3-3z" fill="#6c80c4"/><path d="M7 8q6-3 13 0 3 5 2 10-4 3-5 0H10q-1 3-5 0 0-6 2-10z" fill="#fff"/><circle cx="10.500" cy="13.500" r="1.700" fill="#6c80c4"/><circle cx="16.500" cy="13.500" r="1.700" fill="#6c80c4"/><circle cx="20" cy="21" r="9" fill="#ec5257"/><text x="20" y="26" text-anchor="middle" class="two">2</text></svg>#bot - Disc...</div>
  <div class="app wide"><svg viewBox="0 0 30 30"><path d="M15 0l6.500 6.500L15 13 8.500 6.500z" fill="#ef6b62"/><path d="M7.500 7.500L14 14l-6.500 7.500L0 15z" fill="#7fb3f5"/><path d="M22.500 7.500L30 15l-7.500 6.500L16 14z" fill="#7cc454"/><path d="M15 16l7 7-7 7-7-7z" fill="#fadc6a"/><path d="M12 5l3.500 5v12M15 9l7 6" fill="none" stroke="#30252e" stroke-width="1.800"/><circle cx="15.300" cy="9.500" r="2" fill="#30252e"/><circle cx="22" cy="15.500" r="2" fill="#30252e"/><circle cx="15.300" cy="22" r="2" fill="#30252e"/></svg>MINGW64:/...</div>
  <div class="app cmd"><svg viewBox="0 0 28 24"><rect width="28" height="24" fill="#8d9296"/><rect x="1" y="3" width="26" height="20" fill="#000"/><path d="M1 3h26L1 14z" fill="#303336"/><text x="3" y="12" class="prompt">C:\_</text></svg>Command ...</div>
  <div class="app gear"><svg viewBox="0 0 24 24"><circle cx="12" cy="12" r="10.300" fill="none" stroke="#fff" stroke-width="3.400" stroke-dasharray="4.050 4.040" stroke-dashoffset="2"/><circle cx="12" cy="12" r="7" fill="none" stroke="#fff" stroke-width="3.400"/></svg>Settings</div>
  <span></span>
  <div class="tray">
    <svg width="16" height="18" viewBox="0 0 16 18"><path d="M.5 13L8 5l7.500 8" fill="none" stroke="#fff" stroke-width="1.400"/></svg>
    <svg width="18" height="18" viewBox="0 0 18 18"><circle cx="9" cy="9" r="8" fill="none" stroke="#fff" stroke-width="1.400"/><path d="M4.500 9l3.500 4 5.500-8" fill="none" stroke="#fff" stroke-width="1.700"/></svg>
    <svg width="20" height="16" viewBox="0 0 20 16"><path d="M5 4.500h13v9H5zM19.200 7v4M2 7v7M.5 1v4q1 2 2 2t2-2V1" fill="none" stroke="#fff" stroke-width="1.300"/><path d="M7 6.500h5v5H7z" fill="#fff"/></svg>
    <svg width="17" height="17" viewBox="0 0 17 17"><g fill="none" stroke="#e8dde6" stroke-width="1.300"><path d="M1 16A15 15 0 0 1 16 1M4.500 16A11.500 11.500 0 0 1 16 5M8.500 16A7.500 7.500 0 0 1 16 9"/></g><circle cx="14" cy="14.500" r="2" fill="#fff"/></svg>
    <svg width="19" height="16" viewBox="0 0 19 16"><path d="M.7 5.500H4L7.500 1v14L4 10.500H.7zM11 5l7 7M18 5l-7 7" fill="none" stroke="#fff" stroke-width="1.300"/></svg>
    <span>ENG</span>
    <div class="clock">09:33<br>2019-09-13</div>
    <div class="notif"><svg width="30" height="32" viewBox="0 0 30 32"><path d="M0 1h20v17H5v4l-5-4z" fill="#fff"/><path d="M4 5.500h12M4 9.500h12M4 13.500h8" stroke="#48203f" stroke-width="1.400"/><circle cx="20" cy="20.500" r="9.800" fill="#5b1a66" stroke="#8e6a96" stroke-width="1.200"/><text x="20" y="25.300" text-anchor="middle" class="eight">8</text></svg></div>
    <i></i>
  </div>
</footer>
</body>
</html>
```
FILE: styles.css
```css
* { box-sizing: border-box; }
body { margin: 0; width: 1920px; height: 1080px; overflow: hidden; display: flex; flex-direction: column; font-family: "Liberation Sans", Arial, sans-serif; background: #fff; }
svg { flex: none; display: block; }
.defs { position: absolute; }

/* Browser chrome */
.browser { height: 120px; flex: none; background: #323234; color: #f9f9fa; font: 14.25px "Open Sans", sans-serif; border-bottom: 1px solid #0c0c0d; }
.tabs { height: 40px; display: flex; background: #8a1694; }
.tab { width: 165.850px; flex: none; height: 40px; display: flex; align-items: center; padding: 2px 12px 0 11.500px; border-right: 1px solid #b765be; white-space: nowrap; }
.tab svg { width: 20px; height: 20px; margin-right: 8px; }
.tab span { flex: 1; min-width: 0; overflow: hidden; -webkit-mask-image: linear-gradient(90deg, #000 calc(100% - 28px), transparent); mask-image: linear-gradient(90deg, #000 calc(100% - 28px), transparent); }
.tab:nth-child(3) span, .tab:nth-child(8) span { -webkit-mask-image: none; mask-image: none; }
.tab.active { background: #323234; border-top: 3px solid #0a84ff; padding-top: 0; border-right: 0; padding-right: 16px; }
.tab .close { width: 12px; height: 12px; margin: 0 0 0 10px; }
.newtab { width: 18px; height: 18px; margin: 11px 0 0 12px; }
.winctl { margin-left: auto; display: flex; gap: 43px; padding: 13px 21px 0 0; }
.winctl svg { width: 14px; height: 14px; }
.cpp { font: bold 10px "Liberation Serif", serif; fill: #fff; }

.nav { height: 50px; display: grid; align-items: center; justify-items: center; padding: 3px 0 1px 4px;
  grid-template-columns: 42px 40px 41px 38px 148.500px 1054.500px 34px 20px 37px 18px 28px repeat(9, 40px) 10px 42px; }
.back { width: 40px; height: 40px; border-radius: 50%; background: #646466; display: grid; place-items: center; box-shadow: 0 0 0 1px #232324; }
.url { justify-self: stretch; height: 37px; background: #474749; border: 1px solid #5c5c5e; border-radius: 2px; display: flex; align-items: center; padding: 0 8px 0 10px; }
.url .lock { margin: 0 12px 0 8px; }
.url > svg + svg:not(.lock) { margin-left: 15px; }
.url > svg.dots:not(.lock) { margin-left: 18px; }
.addr { flex: 1; font-size: 16.430px; color: #a2a2a4; white-space: nowrap; padding-top: 3px; }
.addr b { font-weight: 400; color: #fff; }
.minus { justify-self: end; }
.plus { justify-self: start; }
.bar { width: 1px; height: 20px; background: #6a6a6c; }
.bar.tall { height: 42px; }
.zoom { font-size: 14.250px; }
.ext { position: relative; }
.ext em { position: absolute; left: 13px; top: -8px; font: bold 13px/16px "Open Sans", sans-serif; background: #5a5a5c; border-radius: 2px; padding: 0 4px; color: #fff; }
.ext:not(.mail) em { letter-spacing: -.3px; }
.ext:nth-child(17) em { left: 4px; padding: 0 3px; }
.ext.mail em { background: #ea4b3c; left: 11px; padding: 0 2px; }

.marks { display: grid; height: 29px; padding: 0 0 0 15px; align-items: center; white-space: nowrap;
  grid-template-columns: 141px 98px 198px 198.500px 153px 87px 84px 93px 199px 154px 1fr; }
.marks div { display: flex; align-items: center; gap: 5px; }
.marks svg { width: 20px; height: 20px; }
.marks .orange svg { color: #f0641e; }
.marks .sep { border-left: 1px solid #68686a; margin-left: -10px; padding-left: 9px; }

/* Document header */
.head { height: 81px; flex: none; display: flex; border-bottom: 1px solid #d9dbe0; font-family: Roboto, sans-serif; }
.logo { width: 34px; height: 46px; margin: 17px 26px 0 28px; }
.names { width: 1361px; padding-top: 12px; }
.titlerow { display: flex; height: 34px; padding-left: 2px; align-items: center; }
h1 { margin: -2px 0 0; width: 157px; font: 22.500px Roboto, sans-serif; letter-spacing: .05px; color: #000; }
.star { width: 20px; height: 19px; }
.folder { width: 20px; height: 18px; margin-left: 15px; }
.menu { display: flex; gap: 17.500px; padding-left: 1px; margin-top: 3px; font-size: 17.500px; line-height: 24px; letter-spacing: .16px; color: #202124; white-space: nowrap; }
.menu a { margin-left: 9px; color: #777; letter-spacing: 0; text-decoration: underline; }
.people { display: flex; margin-top: 19px; height: 42px; align-items: center; }
.people b { width: 42px; height: 42px; margin-right: -8px; border-radius: 50%; border: 1px solid #fff; display: grid; place-items: center; font-size: 22px; font-weight: 500; color: #fff; }
.j { background: #ff0080; }
.a { background: #00a4bd; }
.m { background: #a33bb7; }
.people .chat { width: 43px; height: 43px; background: #fff; border: 2px solid #dadce0; }
.trend, .cmt { fill: #5f6368; }
.trend { width: 31px; height: 31px; margin: 24px 0 0 28px; }
.cmt { width: 31px; height: 31px; margin: 23px 0 0 32px; }
.share { margin: 18px 0 0 23px; width: 99px; height: 45px; background: #1a73e8; border: 0; border-radius: 5px; color: #fff; font: 500 17.500px Roboto, sans-serif; display: flex; align-items: center; gap: 6px; padding: 0 0 3px 15px; flex: none; }
.me { width: 40px; height: 40px; margin: 20px 0 0 25px; color: #0bff5d; }

/* Editor */
.work { display: flex; flex: 1; min-height: 0; }
.editor { width: 1850px; display: flex; flex-direction: column; }
.toolbar { height: 48px; flex: none; display: grid; align-items: center; justify-items: center; padding: 0 0 0 27.500px; font: 500 15.300px Roboto, sans-serif; color: #54585d;
  grid-template-columns: 35px 35px 34px 35px 35px 7.500px 84.500px 8px 133.500px 8px 133px 8px 85px 8px 36px 34px 34px 36px 40px 9px 36px 32px 32px 15px 15px 32px 36px 34px 34px 12px 36px 12px 36px 19px 40px 14px 42px 28px 17px 28px 1fr 28px 108px 16px 18px 28px 8px; }
.toolbar svg { width: 24px; height: 24px; fill: #54585d; }
.toolbar svg.big { width: 28px; height: 30px; }
.toolbar svg.car { width: 10px; height: 6px; color: #54585d; }
.toolbar i { width: 1px; height: 25px; background: #dadce0; }
.pick { width: 100%; display: flex; align-items: center; justify-content: space-between; padding: 0 7px 0 16px; }
.pick.mode { padding-left: 5px; }
.on { width: 32px; height: 32px; background: #e8f0fe; border-radius: 3px; display: grid; place-items: center; }
.toolbar .on svg { fill: #1a73e8; }
.ruler { height: 18px; }
.nums { font: 12.500px Roboto, sans-serif; fill: #3c4043; text-anchor: middle; }

.canvas { flex: 1; min-height: 0; display: flex; background: #f8f9fb; overflow: hidden; }
.left { width: 388px; padding: 21px 0 0 2px; }
.outline { width: 69px; height: 59px; background: #fff; border-radius: 0 30px 30px 0; box-shadow: 0 1px 3px rgba(60, 64, 67, .35); display: grid; place-items: center; padding: 1px 0 0; }
.page { width: 993px; height: 900px; margin-top: 11px; background: #fff; box-shadow: 0 0 3px rgba(60, 64, 67, .28); padding: 118px 100px 0 120px; font-size: 18.330px; line-height: 25px; color: #000; white-space: nowrap; }
.page h2 { margin: 0; padding: 0 13px 0 0; font-size: 23.330px; line-height: 34px; height: 66.400px; text-align: center; width: 737px; }
.page h3 { margin: 0; font-size: 18.330px; }
.page p { margin: 0 0 25px; }
.page p.gap { height: 75px; }
.flag, .own { position: relative; display: inline-block; width: 0; height: 0; }
.flag::before, .flag::after, .own::before { content: ""; position: absolute; background: currentColor; }
.flag::before { width: 2px; height: 24px; left: 0; top: -20px; }
.flag::after { width: 8px; height: 7px; left: -2px; top: -20px; }
.own::before { width: 2px; height: 22px; left: 0; top: -18px; background: #000; }
.pink { color: #ff0080; left: 5px; }
.pink::after { left: -3px; }
.teal { color: #00a4bd; }
.violet { color: #a33bb7; left: -1px; }
.right { flex: 1; display: flex; align-items: flex-end; justify-content: flex-end; padding: 0 1px 10px 0; }
.explore { width: 47px; height: 46px; background: #fafafa; border-radius: 2px; box-shadow: 0 0 3px rgba(0, 0, 0, .45); display: grid; place-items: center; }
.scroll { width: 20px; background: #f0f0f0; border-right: 1px solid #e3e3e3; display: flex; flex-direction: column; align-items: center; padding: 7px 0; }
.scroll svg { width: 10px; height: 8px; }
.thumb { width: 19px; height: 372px; margin: 6px 0 auto; background: #cbcbcb; }
.side { width: 70px; border-left: 1px solid #d9dbe0; display: flex; flex-direction: column; align-items: center; padding: 25px 0 59px 1px; }
.side svg + svg { margin-top: 48px; }
.side svg.exp { margin-top: auto; }
.cal { font: 12.500px Roboto, sans-serif; fill: #fff; }

/* Taskbar */
.task { height: 50px; flex: none; background: linear-gradient(90deg, #45203c, #48223f 40%, #45203f); color: #fff; font: 15px "Open Sans", sans-serif; letter-spacing: -.25px; display: grid; white-space: nowrap;
  grid-template-columns: 65px 144px 144px 58px repeat(8, 144px) 1fr auto; }
.win { width: 20px; height: 20px; margin: 15px 0 0 20px; }
.app { display: flex; align-items: center; gap: 5px; padding: 0 0 0 12px; background: linear-gradient(#eb9cf0, #eb9cf0) 5px 100% / 134px 3px no-repeat; }
.app svg { width: 28px; height: 28px; }
.app.cur { background: linear-gradient(#eb9cf0, #eb9cf0) 0 100% / 144px 3px no-repeat #681b6c; gap: 4px; }
.app.logs svg { margin-right: -2px; }
.app.wide { padding-left: 10px; gap: 4px; }
.app.wide svg { width: 30px; height: 30px; }
.app.spot { padding-left: 11px; }
.app.npp { gap: 4px; }
.app.cmd { padding-left: 11px; gap: 5px; }
.app.cmd svg { height: 24px; }
.app.gear { padding-left: 14px; gap: 8px; }
.app.gear svg { width: 23px; height: 23px; }
.chrome { display: grid; place-items: center; }
.chrome svg { width: 28px; height: 28px; }
.two { font: 600 13px "Open Sans", sans-serif; fill: #fff; }
.eight { font: 600 13px "Open Sans", sans-serif; fill: #fff; }
.prompt { font: bold 8px "Liberation Mono", monospace; fill: #fff; }
.tray { display: grid; width: 346px; align-items: center; justify-items: center; font-size: 14.200px;
  grid-template-columns: 16px 44px 17px 46px 10px 66px 70px 70px 7px; }
.clock { line-height: 23px; text-align: center; letter-spacing: 0; }
.notif { justify-self: start; padding: 5px 0 0 26px; }
.tray i { width: 1px; height: 50px; background: #8c6f88; }
```
